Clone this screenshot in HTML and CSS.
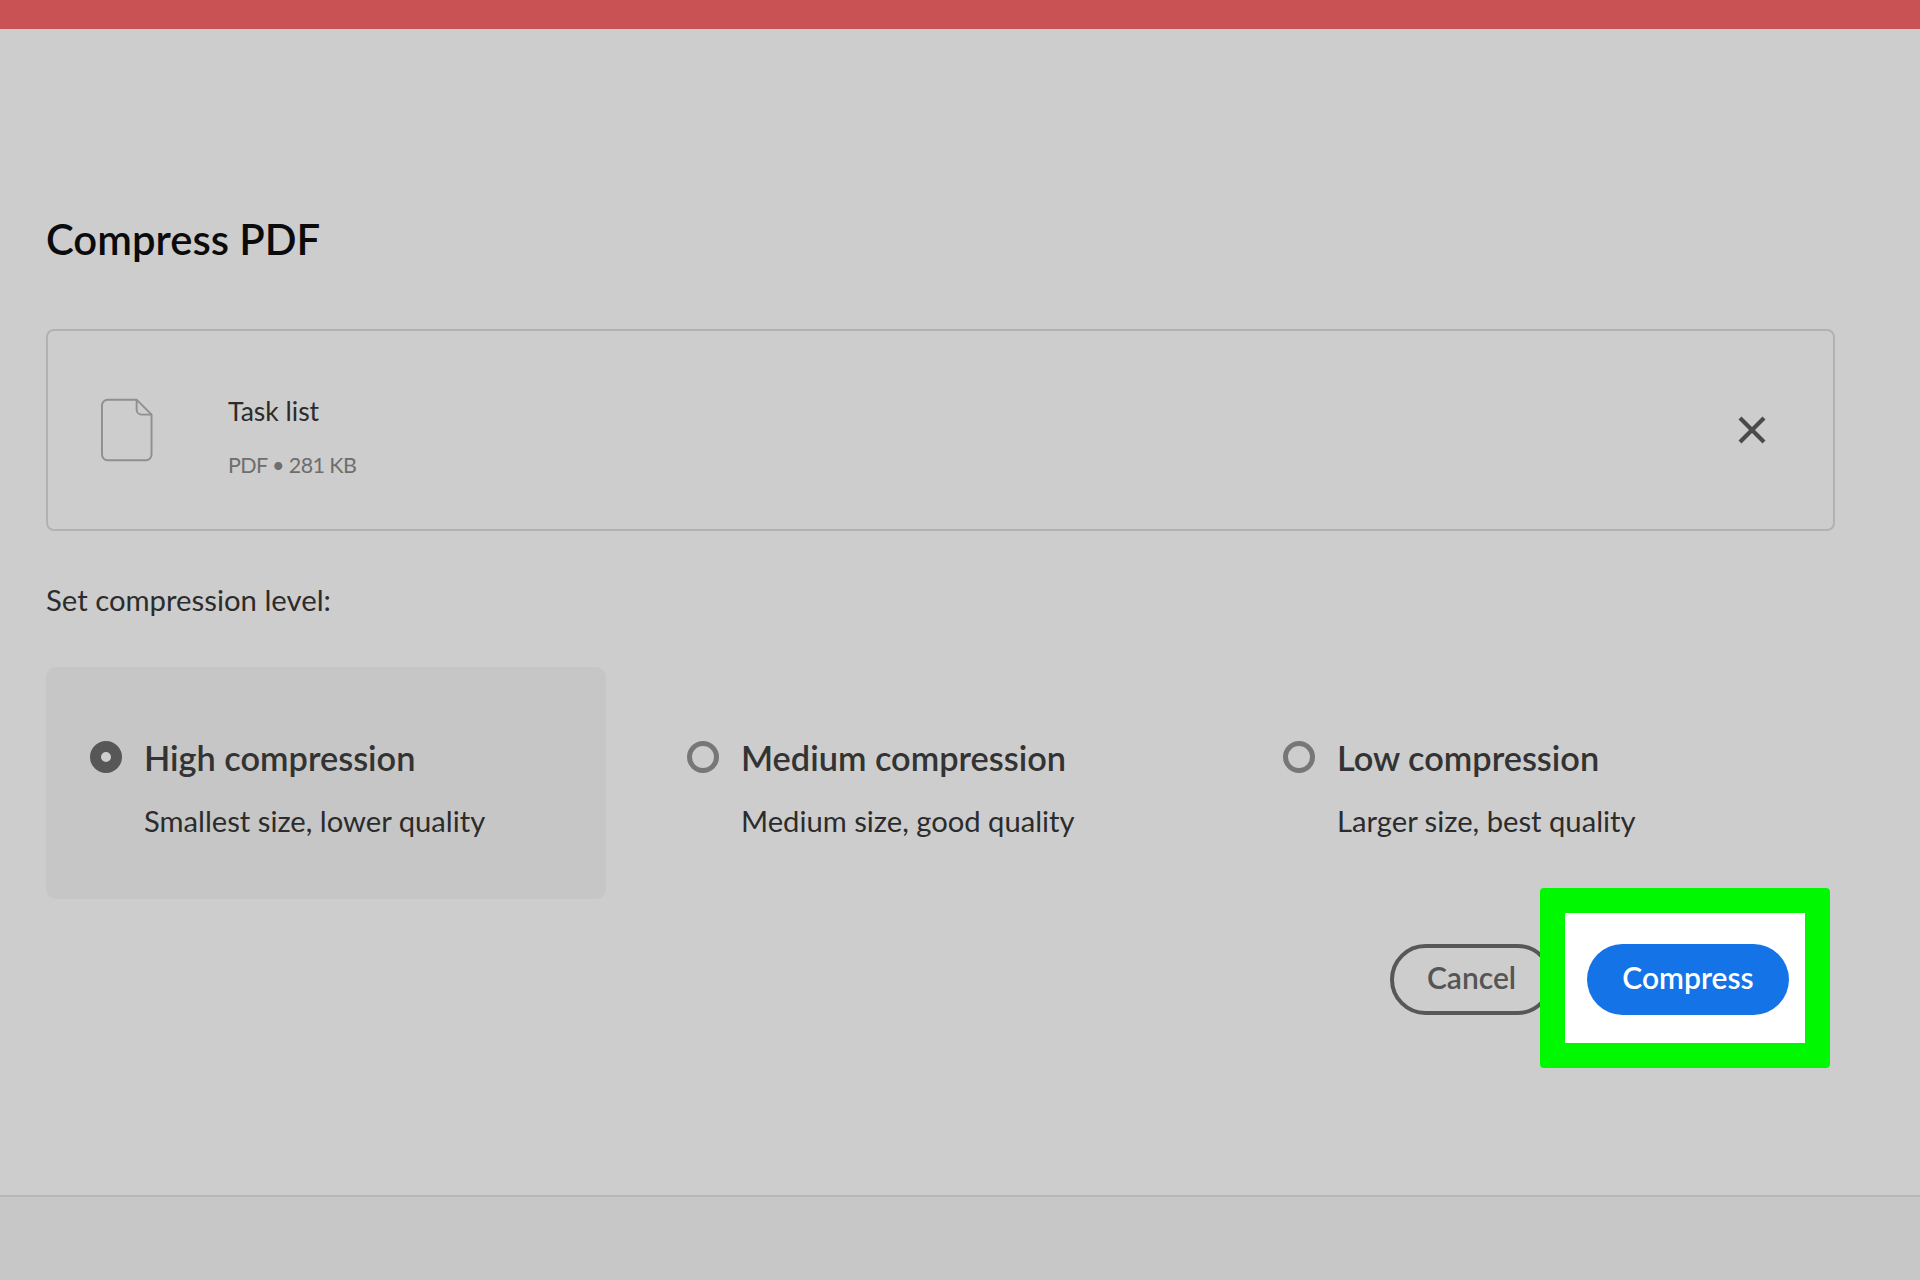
FILE: index.html
```html
<!DOCTYPE html>
<html lang="en">
<head>
<meta charset="utf-8">
<title>Compress PDF</title>
<link rel="stylesheet" href="styles.css">
</head>
<body>
<div class="topbar"></div>
<main class="main">
  <h1 class="title">Compress PDF</h1>
  <section class="file-card">
    <svg class="doc-icon" viewBox="0 0 54 66" width="52" height="64" aria-hidden="true">
      <path d="M7 1.5H37L52.5 17V58.5A6 6 0 0 1 46.5 64.5H7A6 6 0 0 1 1 58.5V7.5A6 6 0 0 1 7 1.5Z" fill="none" stroke="#8f8f8f" stroke-width="2"/>
      <path d="M37 1.5V12A5 5 0 0 0 42 17H52.5" fill="none" stroke="#8f8f8f" stroke-width="2"/>
    </svg>
    <div class="file-info">
      <div class="file-name">Task list</div>
      <div class="file-meta">PDF • 281 KB</div>
    </div>
    <svg class="close-icon" viewBox="0 0 28 28" width="28" height="28" aria-hidden="true">
      <path d="M2 2L26 26M26 2L2 26" stroke="#4b4b4b" stroke-width="4.2" fill="none"/>
    </svg>
  </section>
  <p class="level-label">Set compression level:</p>
  <div class="options">
    <div class="option option-selected">
      <span class="radio radio-on"></span>
      <div>
        <div class="option-title">High compression</div>
        <div class="option-desc">Smallest size, lower quality</div>
      </div>
    </div>
    <div class="option">
      <span class="radio"></span>
      <div>
        <div class="option-title">Medium compression</div>
        <div class="option-desc">Medium size, good quality</div>
      </div>
    </div>
    <div class="option">
      <span class="radio"></span>
      <div>
        <div class="option-title">Low compression</div>
        <div class="option-desc">Larger size, best quality</div>
      </div>
    </div>
  </div>
  <div class="actions">
    <button class="btn btn-cancel">Cancel</button>
    <div class="highlight">
      <button class="btn btn-primary">Compress</button>
    </div>
  </div>
</main>
<footer class="footer"></footer>
</body>
</html>
```
FILE: styles.css
```css
* { box-sizing: border-box; }
html, body { margin: 0; height: 1280px; overflow: hidden; }
body {
  display: flex;
  flex-direction: column;
  background: #cdcdcd;
  font-family: Lato, "Open Sans", sans-serif;
  color: #2c2c2c;
}
.topbar { height: 29px; flex: none; background: #c95255; }
.main {
  height: 1166px;
  flex: none;
  padding: 186px 85px 0 46px;
}
.title {
  margin: 0;
  height: 50px;
  font-size: 41.8px;
  line-height: 49px;
  font-weight: 600;
  color: #0b0b0b;
}
.file-card {
  margin-top: 64px;
  height: 202px;
  display: flex;
  align-items: center;
  padding: 0 67px 0 53px;
  border: 2.5px solid #b2b2b2;
  border-radius: 8px;
}
.doc-icon { flex: none; }
.file-info { margin-left: 75px; padding-top: 13px; flex: 1; }
.file-name { font-size: 26.5px; line-height: 36px; color: #2c2c2c; }
.file-meta { margin-top: 21px; font-size: 21.5px; line-height: 30px; letter-spacing: -0.6px; color: #6e6e6e; }
.close-icon { flex: none; }
.level-label {
  margin: 51px 0 0;
  font-size: 29.3px;
  line-height: 36px;
  color: #2c2c2c;
}
.options {
  margin-top: 49px;
  display: grid;
  grid-template-columns: 560px 596px 1fr;
  height: 232px;
}
.option {
  display: flex;
  gap: 22px;
  padding: 70px 0 0 44px;
  border-radius: 10px;
}
.option + .option { padding-left: 81px; }
.option-selected { background: #c6c6c6; }
.radio {
  flex: none;
  width: 32px;
  height: 32px;
  margin-top: 4px;
  border-radius: 50%;
  border: 5px solid #777;
}
.radio-on { border: 11px solid #575757; background: #cfcfcf; }
.option-title { font-size: 34.3px; line-height: 42px; font-weight: 600; color: #333; }
.option-desc { margin-top: 22px; font-size: 29.2px; line-height: 40px; color: #2c2c2c; }
.actions {
  margin-top: -11px;
  margin-right: 5px;
  display: flex;
  justify-content: flex-end;
  align-items: flex-start;
}
.btn {
  height: 71px;
  border-radius: 36px;
  font-family: inherit;
  font-size: 30px;
  font-weight: 600;
  padding: 0 0 6px;
}
.btn-cancel {
  margin-top: 56px;
  margin-right: -13px;
  width: 163px;
  color: #555;
  background: transparent;
  border: 4px solid #575757;
}
.highlight {
  position: relative;
  width: 290px;
  height: 180px;
  padding: 31px 25px 0 22px;
  background: #fff;
  border: 25px solid #00f900;
  border-radius: 4px;
}
.btn-primary {
  display: block;
  width: 202px;
  color: #fff;
  background: #1473e6;
  border: none;
}
.footer { flex: 1; background: #c7c7c7; border-top: 2px solid #b8b8b8; }
```
